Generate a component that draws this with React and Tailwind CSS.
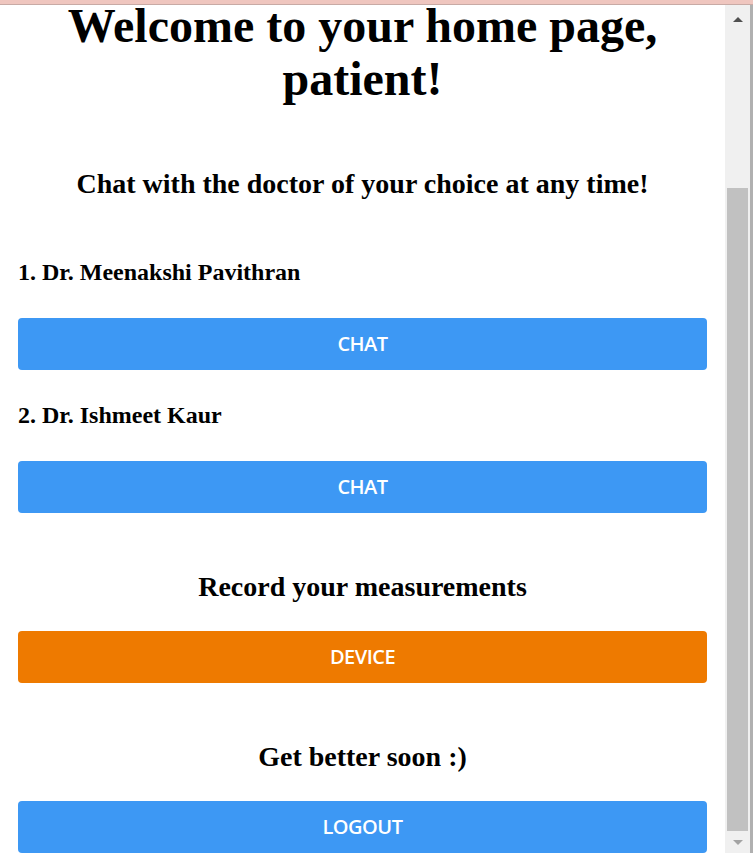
import React from "react";

const doctors = ["Dr. Meenakshi Pavithran", "Dr. Ishmeet Kaur"];

const Btn = ({ label, color = "bg-[#3d98f4]" }) => (
    <button className={`w-full h-[52px] ${color} text-white rounded-[4px] font-['Open_Sans',sans-serif] font-semibold text-[20px] tracking-tight`}>
        {label}
    </button>
);

const Scrollbar = () => (
    <div className="w-[28px] flex shrink-0">
        <div className="w-[25px] bg-[#f0f0f0] flex flex-col items-center">
            <div className="h-[26px] flex items-center justify-center pt-[2px]">
                <div className="w-0 h-0 border-l-[5px] border-r-[5px] border-b-[5px] border-l-transparent border-r-transparent border-b-[#505050]" />
            </div>
            <div className="h-[157px]" />
            <div className="w-[21px] flex-1 bg-[#c1c1c1]" />
            <div className="h-[22px] flex items-center justify-center">
                <div className="w-0 h-0 border-l-[5px] border-r-[5px] border-t-[5px] border-l-transparent border-r-transparent border-t-[#a3a3a3]" />
            </div>
        </div>
        <div className="w-[3px] bg-[#b0b0b0]" />
    </div>
);

const App = () => {
    return (
        <div className="w-[753px] h-[853px] overflow-hidden flex flex-col bg-white font-['Liberation_Serif',serif]">
            <div className="h-[4px] bg-[#efc6bf] shrink-0" />
            <div className="h-[1px] bg-[#c8aaa5] shrink-0" />
            <div className="flex flex-1 min-h-0">
                <main className="flex-1 overflow-hidden px-[18px] pt-[1px] text-black">
                    <h1 className="text-[48px] font-bold text-center flex flex-col">
                        <span className="leading-[40px]">Welcome to your home page,</span>
                        <span className="leading-[53px] mt-[6px]">patient!</span>
                    </h1>
                    <h2 className="text-[28px] leading-[32px] font-bold text-center mt-[63px]">
                        Chat with the doctor of your choice at any time!
                    </h2>
                    <div className="mt-[58px]">
                        {doctors.map((d, i) => (
                            <div key={d} className={i > 0 ? "mt-[31px]" : ""}>
                                <p className="text-[24px] leading-[28px] font-bold mb-[32px]">{i + 1}. {d}</p>
                                <Btn label="CHAT" />
                            </div>
                        ))}
                    </div>
                    <h2 className="text-[28px] leading-[32px] font-bold text-center mt-[58px] mb-[28px]">
                        Record your measurements
                    </h2>
                    <Btn label="DEVICE" color="bg-[#ee7a00]" />
                    <h2 className="text-[28px] leading-[32px] font-bold text-center mt-[58px] mb-[28px]">
                        Get better soon :)
                    </h2>
                    <Btn label="LOGOUT" />
                </main>
                <Scrollbar />
            </div>
        </div>
    );
};

export default App;
